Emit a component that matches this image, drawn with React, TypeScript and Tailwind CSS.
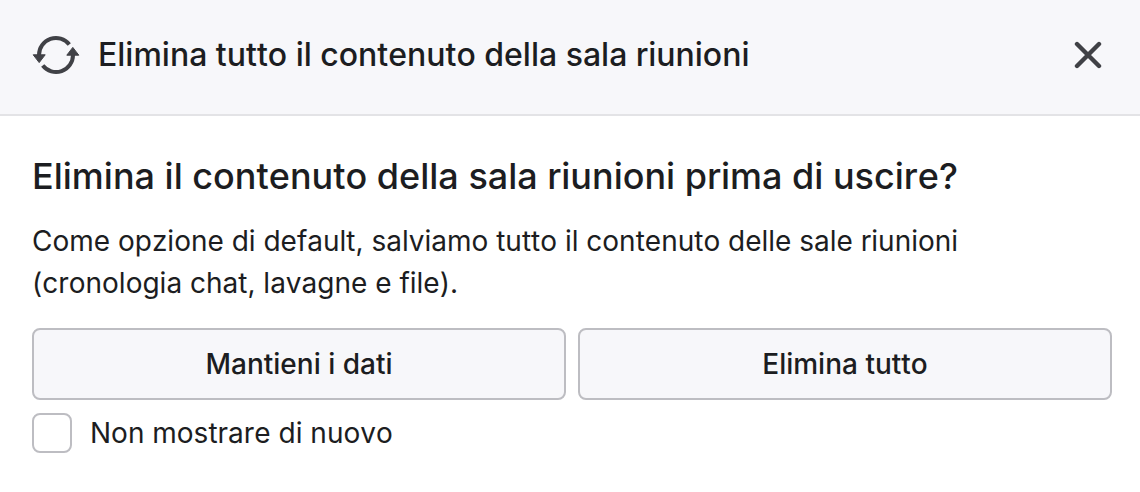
import { useState } from 'react';

const SyncIcon = () => (
  <svg width="48" height="40" viewBox="0 0 48 40" fill="none" aria-hidden="true">
    <path d="M7 21V20A17 17 0 0 1 37.3 9.4" stroke="#404146" strokeWidth="4" />
    <path d="M41 19V20A17 17 0 0 1 10.7 30.6" stroke="#404146" strokeWidth="4" />
    <path d="M1.2 19.8H13.2L7.2 27.6Z" fill="#404146" stroke="#404146" strokeLinejoin="round" />
    <path d="M34.8 20.2H46.8L40.8 12.4Z" fill="#404146" stroke="#404146" strokeLinejoin="round" />
  </svg>
);

const CloseIcon = () => (
  <svg width="28" height="28" viewBox="0 0 28 28" fill="none" aria-hidden="true">
    <path d="M3 3L25 25M25 3L3 25" stroke="#404146" strokeWidth="4.4" strokeLinecap="round" />
  </svg>
);

const choiceClass =
  'h-[72px] flex-1 rounded-lg border-2 border-[#bdbdc2] bg-[#f7f7fa] text-[28px] font-medium';

const App = () => {
  const [dontShow, setDontShow] = useState(false);

  return (
    <main className="min-h-screen bg-white font-['Inter',sans-serif] text-[#1c1d21] [font-kerning:none]">
      <header className="flex items-center border-b-2 border-[#e3e3e6] bg-[#f7f7fa] pt-8 pr-9 pb-9 pl-8">
        <SyncIcon />
        <h1 className="ml-[18px] flex-1 text-[32px] leading-[46px] font-medium">
          Elimina tutto il contenuto della sala riunioni
        </h1>
        <button type="button" aria-label="Chiudi" className="p-0.5">
          <CloseIcon />
        </button>
      </header>

      <section className="pt-9 pr-7 pb-8 pl-8">
        <h2 className="text-[36px] leading-[48px] font-medium">
          Elimina il contenuto della sala riunioni prima di uscire?
        </h2>
        <p className="mt-5 max-w-[960px] text-[28px] leading-[42px]">
          Come opzione di default, salviamo tutto il contenuto delle sale riunioni (cronologia chat, lavagne e file).
        </p>
        <div className="mt-6 flex gap-3">
          <button type="button" className={choiceClass}>Mantieni i dati</button>
          <button type="button" className={choiceClass}>Elimina tutto</button>
        </div>
        <label className="mt-3 flex w-fit items-center gap-[18px] text-[28px] leading-[42px]">
          <input
            type="checkbox"
            checked={dontShow}
            onChange={(e) => setDontShow(e.target.checked)}
            className="size-10 appearance-none rounded-lg border-2 border-[#bdbdc2] bg-white checked:bg-[#404146]"
          />
          Non mostrare di nuovo
        </label>
      </section>
    </main>
  );
};

export default App;
